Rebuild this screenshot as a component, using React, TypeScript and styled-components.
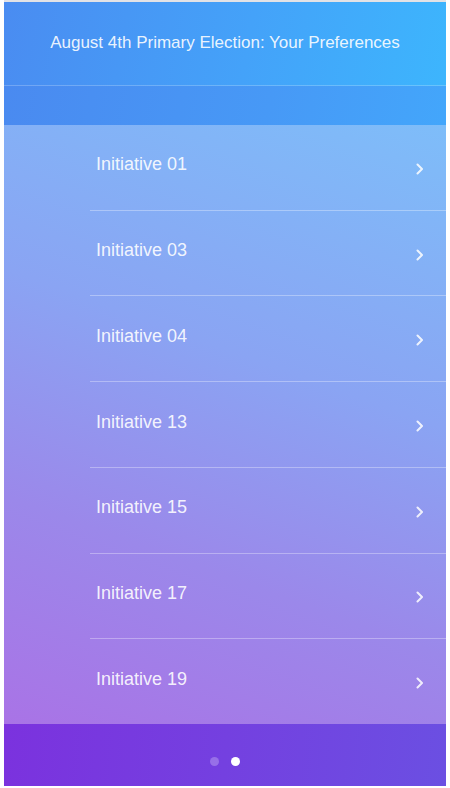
import React from "react";
import styled, { createGlobalStyle } from "styled-components";

const Global = createGlobalStyle`
  html, body { margin: 0; padding: 0; background: #ffffff; }
  body { font-family: "Liberation Sans", Arial, sans-serif; }
`;

const Screen = styled.div`
  width: 442px;
  height: 786px;
  margin-left: 4px;
  border-top: 2px solid #e2e2e6;
  box-sizing: border-box;
  display: flex;
  flex-direction: column;
  overflow: hidden;
`;

const Header = styled.header`
  height: 84px;
  flex: none;
  box-sizing: border-box;
  display: flex;
  align-items: center;
  justify-content: center;
  padding-bottom: 1px;
  background: linear-gradient(100deg, #4a8cf1 0%, #44a2f9 55%, #3db5fd 100%);
  border-bottom: 1px solid rgba(255, 255, 255, 0.22);
`;

const Title = styled.h1`
  margin: 0;
  font-size: 17px;
  font-weight: 400;
  color: rgba(255, 255, 255, 0.9);
`;

const SubBar = styled.div`
  height: 39px;
  flex: none;
  background: linear-gradient(100deg, #4a8af0 0%, #4799f6 60%, #43a6fb 100%);
`;

const List = styled.ul`
  flex: 1;
  margin: 0;
  padding: 0;
  list-style: none;
  display: flex;
  flex-direction: column;
  background: linear-gradient(200deg, #7ebdf9 0%, #8aa4f3 40%, #9b88ea 70%, #a973e6 100%);
`;

const Row = styled.li<{ $last?: boolean }>`
  flex: 1;
  margin-left: 86px;
  padding: 0 22px 0 6px;
  box-sizing: border-box;
  display: flex;
  align-items: center;
  justify-content: space-between;
  border-bottom: ${(p) => (p.$last ? "none" : "1px solid rgba(255, 255, 255, 0.32)")};
`;

const Label = styled.span`
  font-size: 18px;
  color: rgba(255, 255, 255, 0.9);
  margin-bottom: 5px;
`;

const Chevron = styled.svg`
  width: 8px;
  height: 12px;
  margin-top: 3px;
  opacity: 0.85;
`;

const Footer = styled.footer`
  height: 62px;
  flex: none;
  display: flex;
  align-items: center;
  justify-content: center;
  gap: 12px;
  padding-top: 12px;
  box-sizing: border-box;
  background: linear-gradient(95deg, #7b32de 0%, #7440e0 50%, #6b4fe2 100%);
`;

const Dot = styled.span<{ $active?: boolean }>`
  width: 9px;
  height: 9px;
  border-radius: 50%;
  background: ${(p) => (p.$active ? "#ffffff" : "rgba(255, 255, 255, 0.25)")};
`;

const items = ["01", "03", "04", "13", "15", "17", "19"];

export default function App() {
  return (
    <>
      <Global />
      <Screen>
        <Header>
          <Title>August 4th Primary Election: Your Preferences</Title>
        </Header>
        <SubBar />
        <List>
          {items.map((n, i) => (
            <Row key={n} $last={i === items.length - 1}>
              <Label>Initiative {n}</Label>
              <Chevron viewBox="0 0 8 12" fill="none">
                <path d="M1.5 1.5 L6 6 L1.5 10.5" stroke="#ffffff" strokeWidth="2" strokeLinecap="round" strokeLinejoin="round" />
              </Chevron>
            </Row>
          ))}
        </List>
        <Footer>
          <Dot />
          <Dot $active />
        </Footer>
      </Screen>
    </>
  );
}
